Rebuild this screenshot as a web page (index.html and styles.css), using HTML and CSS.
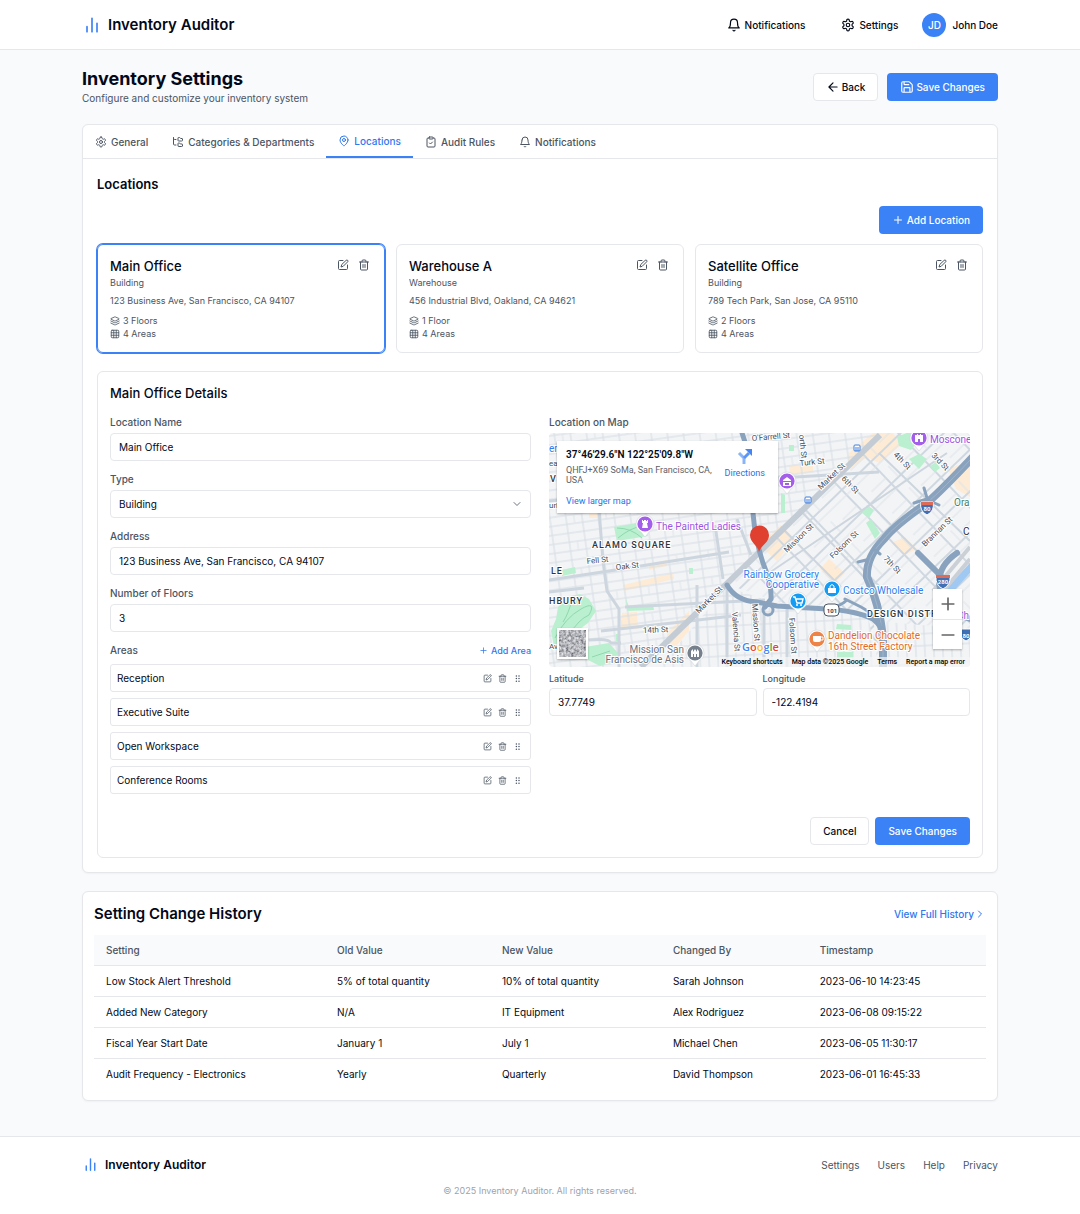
FILE: index.html
```html
<!DOCTYPE html>
<html lang="en">

<head>
    <meta charset="UTF-8">
    <meta name="viewport" content="width=device-width, initial-scale=1.0">
    <title>Inventory Settings - Inventory Auditor</title>
    <link rel="stylesheet" href="styles.css">
</head>

<body>
    <!-- Icon sprite -->
    <svg class="sprite" aria-hidden="true">
        <symbol id="i-chart" viewBox="0 0 24 24"><path d="M18 20V10M12 20V4M6 20v-6" /></symbol>
        <symbol id="i-bell" viewBox="0 0 24 24"><path d="M6 8a6 6 0 0 1 12 0c0 7 3 9 3 9H3s3-2 3-9M10.3 21a1.94 1.94 0 0 0 3.4 0" /></symbol>
        <symbol id="i-settings" viewBox="0 0 24 24"><path d="M12.22 2h-.44a2 2 0 0 0-2 2v.18a2 2 0 0 1-1 1.73l-.43.25a2 2 0 0 1-2 0l-.15-.08a2 2 0 0 0-2.73.73l-.22.38a2 2 0 0 0 .73 2.73l.15.1a2 2 0 0 1 1 1.72v.51a2 2 0 0 1-1 1.74l-.15.09a2 2 0 0 0-.73 2.73l.22.38a2 2 0 0 0 2.73.73l.15-.08a2 2 0 0 1 2 0l.43.25a2 2 0 0 1 1 1.73V20a2 2 0 0 0 2 2h.44a2 2 0 0 0 2-2v-.18a2 2 0 0 1 1-1.73l.43-.25a2 2 0 0 1 2 0l.15.08a2 2 0 0 0 2.73-.73l.22-.39a2 2 0 0 0-.73-2.73l-.15-.08a2 2 0 0 1-1-1.74v-.5a2 2 0 0 1 1-1.74l.15-.09a2 2 0 0 0 .73-2.73l-.22-.38a2 2 0 0 0-2.73-.73l-.15.08a2 2 0 0 1-2 0l-.43-.25a2 2 0 0 1-1-1.73V4a2 2 0 0 0-2-2z" /><circle cx="12" cy="12" r="3" /></symbol>
        <symbol id="i-back" viewBox="0 0 24 24"><path d="m12 19-7-7 7-7M19 12H5" /></symbol>
        <symbol id="i-save" viewBox="0 0 24 24"><path d="M15.2 3a2 2 0 0 1 1.4.6l3.8 3.8a2 2 0 0 1 .6 1.4V19a2 2 0 0 1-2 2H5a2 2 0 0 1-2-2V5a2 2 0 0 1 2-2zM17 21v-7a1 1 0 0 0-1-1H8a1 1 0 0 0-1 1v7M7 3v4a1 1 0 0 0 1 1h7" /></symbol>
        <symbol id="i-tree" viewBox="0 0 24 24"><path d="M20 10a1 1 0 0 0 1-1V6a1 1 0 0 0-1-1h-2.5a1 1 0 0 1-.8-.4l-.9-1.2A1 1 0 0 0 15 3h-2a1 1 0 0 0-1 1v5a1 1 0 0 0 1 1ZM20 21a1 1 0 0 0 1-1v-3a1 1 0 0 0-1-1h-2.9a1 1 0 0 1-.88-.55l-.42-.85a1 1 0 0 0-.92-.6H13a1 1 0 0 0-1 1v5a1 1 0 0 0 1 1ZM3 5a2 2 0 0 0 2 2h3M3 3v13a2 2 0 0 0 2 2h3" /></symbol>
        <symbol id="i-pin" viewBox="0 0 24 24"><path d="M20 10c0 6-8 12-8 12s-8-6-8-12a8 8 0 0 1 16 0Z" /><circle cx="12" cy="10" r="3" /></symbol>
        <symbol id="i-clipboard" viewBox="0 0 24 24"><rect x="8" y="2" width="8" height="4" rx="1" /><path d="M16 4h2a2 2 0 0 1 2 2v14a2 2 0 0 1-2 2H6a2 2 0 0 1-2-2V6a2 2 0 0 1 2-2h2M9 14l2 2 4-4" /></symbol>
        <symbol id="i-plus" viewBox="0 0 24 24"><path d="M5 12h14M12 5v14" /></symbol>
        <symbol id="i-edit" viewBox="0 0 24 24"><path d="M12 3H5a2 2 0 0 0-2 2v14a2 2 0 0 0 2 2h14a2 2 0 0 0 2-2v-7M18.4 2.6a2.1 2.1 0 0 1 3 3L12.4 14.6 8 16l1.4-4.4Z" /></symbol>
        <symbol id="i-trash" viewBox="0 0 24 24"><path d="M3 6h18M19 6v14a2 2 0 0 1-2 2H7a2 2 0 0 1-2-2V6M8 6V4a2 2 0 0 1 2-2h4a2 2 0 0 1 2 2v2M10 11v6M14 11v6" /></symbol>
        <symbol id="i-layers" viewBox="0 0 24 24"><path d="m12.8 2.2a2 2 0 0 0-1.6 0L2.6 6.1a1 1 0 0 0 0 1.8l8.6 3.9a2 2 0 0 0 1.6 0l8.6-3.9a1 1 0 0 0 0-1.8ZM22 12l-9.2 4.2a2 2 0 0 1-1.6 0L2 12M22 17l-9.2 4.2a2 2 0 0 1-1.6 0L2 17" /></symbol>
        <symbol id="i-grid" viewBox="0 0 24 24"><rect x="3" y="3" width="18" height="18" rx="2" /><path d="M3 9h18M3 15h18M9 3v18M15 3v18" /></symbol>
        <symbol id="i-grip" viewBox="0 0 24 24"><path d="M9 5h.01M9 12h.01M9 19h.01M16 5h.01M16 12h.01M16 19h.01" stroke-width="4" /></symbol>
        <symbol id="i-down" viewBox="0 0 24 24"><path d="m6 9 6 6 6-6" /></symbol>
        <symbol id="i-right" viewBox="0 0 24 24"><path d="m9 18 6-6-6-6" /></symbol>
    </svg>

    <header class="site-header">
        <div class="container header-inner">
            <a href="#" class="brand">
                <svg class="icon brand-icon"><use href="#i-chart" /></svg>
                Inventory Auditor
            </a>
            <nav class="header-nav">
                <button type="button" class="nav-btn"><svg class="icon icon-lg"><use href="#i-bell" /></svg>Notifications</button>
                <button type="button" class="nav-btn"><svg class="icon icon-lg"><use href="#i-settings" /></svg>Settings</button>
                <a href="#" class="user"><span class="avatar">JD</span>John Doe</a>
            </nav>
        </div>
    </header>

    <main class="container main">
        <div class="page-head">
            <div>
                <h1>Inventory Settings</h1>
                <p>Configure and customize your inventory system</p>
            </div>
            <div class="page-actions">
                <button type="button" class="btn btn-outline"><svg class="icon icon-lg"><use href="#i-back" /></svg>Back</button>
                <button type="button" class="btn btn-primary"><svg class="icon icon-lg"><use href="#i-save" /></svg>Save Changes</button>
            </div>
        </div>

        <section class="card">
            <div class="tabs" role="tablist">
                <button type="button" class="tab" role="tab"><svg class="icon"><use href="#i-settings" /></svg>General</button>
                <button type="button" class="tab" role="tab"><svg class="icon"><use href="#i-tree" /></svg>Categories &amp; Departments</button>
                <button type="button" class="tab active" role="tab" aria-selected="true"><svg class="icon"><use href="#i-pin" /></svg>Locations</button>
                <button type="button" class="tab" role="tab"><svg class="icon"><use href="#i-clipboard" /></svg>Audit Rules</button>
                <button type="button" class="tab" role="tab"><svg class="icon"><use href="#i-bell" /></svg>Notifications</button>
            </div>

            <div class="tab-panel">
                <h2>Locations</h2>
                <div class="add-row">
                    <button type="button" class="btn btn-primary btn-add"><svg class="icon"><use href="#i-plus" /></svg>Add Location</button>
                </div>

                <div class="location-grid">
                    <article class="location selected">
                        <div class="location-head">
                            <h3>Main Office</h3>
                            <div class="location-actions">
                                <button type="button" class="icon-btn" aria-label="Edit"><svg class="icon"><use href="#i-edit" /></svg></button>
                                <button type="button" class="icon-btn" aria-label="Delete"><svg class="icon"><use href="#i-trash" /></svg></button>
                            </div>
                        </div>
                        <p class="kind">Building</p>
                        <p class="address">123 Business Ave, San Francisco, CA 94107</p>
                        <p class="meta"><svg class="icon"><use href="#i-layers" /></svg>3 Floors</p>
                        <p class="meta"><svg class="icon"><use href="#i-grid" /></svg>4 Areas</p>
                    </article>
                    <article class="location">
                        <div class="location-head">
                            <h3>Warehouse A</h3>
                            <div class="location-actions">
                                <button type="button" class="icon-btn" aria-label="Edit"><svg class="icon"><use href="#i-edit" /></svg></button>
                                <button type="button" class="icon-btn" aria-label="Delete"><svg class="icon"><use href="#i-trash" /></svg></button>
                            </div>
                        </div>
                        <p class="kind">Warehouse</p>
                        <p class="address">456 Industrial Blvd, Oakland, CA 94621</p>
                        <p class="meta"><svg class="icon"><use href="#i-layers" /></svg>1 Floor</p>
                        <p class="meta"><svg class="icon"><use href="#i-grid" /></svg>4 Areas</p>
                    </article>
                    <article class="location">
                        <div class="location-head">
                            <h3>Satellite Office</h3>
                            <div class="location-actions">
                                <button type="button" class="icon-btn" aria-label="Edit"><svg class="icon"><use href="#i-edit" /></svg></button>
                                <button type="button" class="icon-btn" aria-label="Delete"><svg class="icon"><use href="#i-trash" /></svg></button>
                            </div>
                        </div>
                        <p class="kind">Building</p>
                        <p class="address">789 Tech Park, San Jose, CA 95110</p>
                        <p class="meta"><svg class="icon"><use href="#i-layers" /></svg>2 Floors</p>
                        <p class="meta"><svg class="icon"><use href="#i-grid" /></svg>4 Areas</p>
                    </article>
                </div>

                <form class="details">
                    <h3>Main Office Details</h3>
                    <div class="details-grid">
                        <div class="fields">
                            <div class="field">
                                <label for="name">Location Name</label>
                                <input type="text" id="name" value="Main Office">
                            </div>
                            <div class="field">
                                <label for="type">Type</label>
                                <div class="select-wrap">
                                    <select id="type">
                                        <option>Building</option>
                                        <option>Warehouse</option>
                                    </select>
                                    <svg class="icon select-arrow"><use href="#i-down" /></svg>
                                </div>
                            </div>
                            <div class="field">
                                <label for="address">Address</label>
                                <input type="text" id="address" value="123 Business Ave, San Francisco, CA 94107">
                            </div>
                            <div class="field">
                                <label for="floors">Number of Floors</label>
                                <input type="text" inputmode="numeric" id="floors" value="3">
                            </div>
                            <div class="field">
                                <div class="areas-head">
                                    <span class="label">Areas</span>
                                    <button type="button" class="link-btn"><svg class="icon"><use href="#i-plus" /></svg>Add Area</button>
                                </div>
                                <ul class="areas">
                                    <li>Reception
                                        <span class="area-actions">
                                            <button type="button" class="icon-btn" aria-label="Edit"><svg class="icon"><use href="#i-edit" /></svg></button>
                                            <button type="button" class="icon-btn" aria-label="Delete"><svg class="icon"><use href="#i-trash" /></svg></button>
                                            <button type="button" class="icon-btn" aria-label="Move"><svg class="icon"><use href="#i-grip" /></svg></button>
                                        </span>
                                    </li>
                                    <li>Executive Suite
                                        <span class="area-actions">
                                            <button type="button" class="icon-btn" aria-label="Edit"><svg class="icon"><use href="#i-edit" /></svg></button>
                                            <button type="button" class="icon-btn" aria-label="Delete"><svg class="icon"><use href="#i-trash" /></svg></button>
                                            <button type="button" class="icon-btn" aria-label="Move"><svg class="icon"><use href="#i-grip" /></svg></button>
                                        </span>
                                    </li>
                                    <li>Open Workspace
                                        <span class="area-actions">
                                            <button type="button" class="icon-btn" aria-label="Edit"><svg class="icon"><use href="#i-edit" /></svg></button>
                                            <button type="button" class="icon-btn" aria-label="Delete"><svg class="icon"><use href="#i-trash" /></svg></button>
                                            <button type="button" class="icon-btn" aria-label="Move"><svg class="icon"><use href="#i-grip" /></svg></button>
                                        </span>
                                    </li>
                                    <li>Conference Rooms
                                        <span class="area-actions">
                                            <button type="button" class="icon-btn" aria-label="Edit"><svg class="icon"><use href="#i-edit" /></svg></button>
                                            <button type="button" class="icon-btn" aria-label="Delete"><svg class="icon"><use href="#i-trash" /></svg></button>
                                            <button type="button" class="icon-btn" aria-label="Move"><svg class="icon"><use href="#i-grip" /></svg></button>
                                        </span>
                                    </li>
                                </ul>
                            </div>
                        </div>

                        <div class="map-col">
                            <span class="label">Location on Map</span>
                            <div class="map">
                                <svg class="map-canvas" viewBox="0 0 421 234" preserveAspectRatio="xMidYMid slice">
                                    <defs>
                                        <pattern id="west" width="32" height="27" patternUnits="userSpaceOnUse" patternTransform="rotate(-8)">
                                            <path d="M0 3H32M0 12H32M0 21H32M5 0V27M21 0V27" stroke="#d5dde4" stroke-width="1" />
                                            <path d="M13 3V12" stroke="#dfe5ea" stroke-width="1" />
                                        </pattern>
                                        <pattern id="soma" width="40" height="30" patternUnits="userSpaceOnUse" patternTransform="translate(268 60) rotate(-44)">
                                            <path d="M0 15H40M20 0V30" stroke="#cfd8e0" stroke-width="2" />
                                            <path d="M0 22H40M0 7H20M30 0V15" stroke="#dde3e8" stroke-width="1" />
                                        </pattern>
                                        <pattern id="south" width="18" height="30" patternUnits="userSpaceOnUse" patternTransform="rotate(-3)">
                                            <path d="M0 10H18M0 22H18M4 0V30M13 0V30" stroke="#d5dde4" stroke-width="1" />
                                        </pattern>
                                        <g id="poi">
                                            <path d="M-9 0a9 9 0 1 1 18 0c0 4-2 6-5 8l-4 5-4-5c-3-2-5-4-5-8z" fill="#fff" stroke="#c9ced4" stroke-width=".5" />
                                            <circle r="7.6" />
                                        </g>
                                    </defs>
                                    <rect width="421" height="234" fill="#f3f4f6" />

                                    <!-- commercial blocks -->
                                    <g fill="#fdebd5">
                                        <path d="M40 60h13v25H40zM74 152l50-12 1 6-50 12zM73 180l15-1 1 17-17 1zM100 131l18-4v6l-18 4zM8 18h12v8H8z" />
                                        <path d="m300 20 24-20h20l8 12-22 18-12-6-20 14zM210 112l22-20 14 14-18 22zM240 33l24-3v9l-23 2zM342 110l14-6 12 12-12 6zM118 200l22-22v20l-22 26zM280 126l16 14-10 10-15-14zM399 36l8 20 14 8V28z" />
                                    </g>

                                    <path d="M0 0H331L108 217 90 234H0z" fill="url(#west)" />
                                    <path d="M334 0H421V234H330L318 182 232 170 180 152z" fill="url(#soma)" />
                                    <path d="M110 234 178 154 232 172 318 182 334 234z" fill="url(#south)" />
                                    <path d="M324 188 421 196V234H334z" fill="#f3f4f6" />
                                    <path d="M324 188 421 196V234H334z" fill="url(#south)" />

                                    <!-- parks -->
                                    <g fill="#baf0cf">
                                        <path d="m65 94 30-5 4 14-31 5zM13 137l13-3 1 6-14 3z" />
                                        <path d="m19 164 12-3 9 5 7 12-8 12-8 6-2 12-24 6-3-16 5-12 2-12zM36 214l24-4 9 10-4 8-14 5-12-6zM77 166l3 8 24-3 1 6-27 1z" />
                                        <path d="m313 80 5-8 7 5-5 8zM317 90l5-4 9 14-5 6zM348 4l12-5 10 8-8 10-12-4zM360 26l10-5 8 5-8 10zM288 191l14 1v5l-15-1zM232 60l4 2v18h-4zM240 12h5v6h-5zM140 135h4v6h-4zM67 201h4v7h-4zM288 219h16v6h-16zM381 33l6-4 4 6-5 4z" />
                                    </g>
                                    <path d="M68 95q14 0 25 10M69 105q12-10 24-12M6 205q10-20 26-29t8 6q-10 4-20 20M24 164q-5 18-10 25M43 224l18-6" fill="none" stroke="#8fd8ad" stroke-width="1" />
                                    <path d="m385 168 36-38v10l-28 31z" fill="#9fc9f3" />
                                    <path d="m384 158 37-44M390 163l31-37" stroke="#cbd0d6" stroke-width="4" />

                                    <!-- main streets -->
                                    <g fill="none" stroke="#cdd6de" stroke-width="3">
                                        <path d="M0 147l60-9 120-19M0 159l35-4M50 76l4 52 4 30 12 18v58M166 92l8 54M178 150v84M148 152v82M215 234v-66M238 234v-60M188 86l14 36M0 68l230-23 100-6M52 198l80-9 60-7M76 174l140-7M40 207q20-2 22 3l10 0" />
                                        <path d="m330 20 91 88M290 40l100 100M250 76l80 84M232 94l60 60M220 140l178-120" stroke-width="2" />
                                    </g>
                                    <path d="M92 234 331 2" stroke="#c3ccd5" stroke-width="6" />

                                    <!-- freeways -->
                                    <g fill="none" stroke="#89a2bd" stroke-linecap="round">
                                        <path d="m193 0 4 12M204 80q2 26 10 50 9 22 8 36l-6 8M178 152q9 16 30 17l20 4 50 3q30 2 46 10 10 8 10 18v30" stroke-width="5" />
                                        <path d="M424 24q-30 32-46 46-32 22-43 36-18 18-17 38 12 26 16 60v30" stroke-width="8" />
                                        <path d="M424 24q-30 32-46 46-32 22-43 36-18 18-17 38 12 26 16 60v30" stroke="#9fb4ca" stroke-width="1" />
                                        <path d="M296 166l16 8q18 10 20 22M278 176q14-3 20-9M309 129l8-2M331 121l-5-4M375 55l3 10M365 70l13-4M390 72l-9-4" stroke-width="3" />
                                        <path d="m369 120 16 16 8 8M408 120q-18 12-18 30l3 18q8 12 28 18" stroke-width="6" />
                                        <circle cx="219" cy="177" r="5" stroke-width="3" />
                                    </g>

                                    <!-- street names -->
                                    <g class="street">
                                        <text transform="translate(203 8) rotate(-5)">O'Farrell St</text>
                                        <text transform="translate(251 33) rotate(-6)">Turk St</text>
                                        <text transform="translate(250 2) rotate(84)">orth St</text>
                                        <text transform="translate(272 57) rotate(-44)">Market St</text>
                                        <text transform="translate(292 46) rotate(46)">6th St</text>
                                        <text transform="translate(344 22) rotate(46)">4th St</text>
                                        <text transform="translate(382 23) rotate(46)">3rd St</text>
                                        <text transform="translate(238 120) rotate(-44)">Mission St</text>
                                        <text transform="translate(284 126) rotate(-44)">Folsom St</text>
                                        <text transform="translate(376 114) rotate(-44)">Brannan St</text>
                                        <text transform="translate(334 126) rotate(46)">7th St</text>
                                        <text transform="translate(38 131) rotate(-6)">Fell St</text>
                                        <text transform="translate(67 137) rotate(-6)">Oak St</text>
                                        <text transform="translate(150 181) rotate(-46)">Market St</text>
                                        <text transform="translate(94 200) rotate(-2)">14th St</text>
                                        <text transform="translate(183 179) rotate(86)">Valencia St</text>
                                        <text transform="translate(203 171) rotate(86)">Mission St</text>
                                        <text transform="translate(240 185) rotate(86)">Folsom St</text>
                                        <text x="0" y="33">ea</text>
                                        <text x="0" y="75">urk</text>
                                        <text x="0" y="216">Av</text>
                                    </g>
                                    <g class="district">
                                        <text x="43" y="115">ALAMO SQUARE</text>
                                        <text x="2" y="141">LE</text>
                                        <text x="0" y="171">HBURY</text>
                                        <text x="318" y="184">DESIGN DISTR</text>
                                        <text x="1" y="49">V</text>
                                    </g>
                                    <text class="place blue" x="0" y="19">er</text>
                                    <text class="place green" x="405" y="73">Ora</text>
                                    <text class="place dark" x="414" y="102">C</text>

                                    <!-- route shields -->
                                    <g class="shield">
                                        <path d="M372 69h12q2 9-6 13-8-4-6-13z" fill="#3f6fb5" stroke="#fff" />
                                        <path d="M372 69h12v3h-12z" fill="#dd6b55" />
                                        <text x="378" y="78">80</text>
                                        <path d="M387 143h14q1 9-7 13-8-4-7-13z" fill="#3f6fb5" stroke="#fff" />
                                        <path d="M387 142h14v3h-14z" fill="#dd6b55" />
                                        <text x="394" y="151">280</text>
                                        <path d="M411 196h12q1 9-6 12-7-3-6-12z" fill="#3f6fb5" stroke="#fff" />
                                        <text x="417" y="205">80</text>
                                        <rect x="275" y="171" width="15" height="12" rx="4" fill="#fff" stroke="#4b5563" />
                                        <text x="283" y="180" class="shield-us">101</text>
                                    </g>

                                    <!-- transit stops -->
                                    <g fill="#fff" stroke="#3e7fe0" stroke-width="1">
                                        <rect x="305" y="12" width="6" height="6" rx="1" />
                                        <rect x="256" y="64" width="6" height="6" rx="1" />
                                        <path d="M306 15h4M257 67h4M306 17h4M257 69h4" />
                                    </g>

                                    <!-- places -->
                                    <use href="#poi" x="96" y="91" fill="#a35eea" />
                                    <use href="#poi" x="238" y="48" fill="#a35eea" />
                                    <use href="#poi" x="370" y="5" fill="#a35eea" />
                                    <use href="#poi" x="283" y="156" fill="#159df5" />
                                    <use href="#poi" x="249" y="168" fill="#159df5" />
                                    <use href="#poi" x="268" y="206" fill="#ee8348" />
                                    <use href="#poi" x="146" y="220" fill="#75808c" />
                                    <path d="M93 87h1v1h1v-1h2v1h1v-1h1v3h-1l1 5h-6l1-5h-1zM234 47l4-3 4 3v1h-8zm0 2h8v4h-8zM366 2h2v-1h1v1h2v-1h1v1h2v7h-3V6h-2v3h-3zM279 155h8v5h-8zM142 224v-6l2-2v3l2-3 2 3v-3l2 2v6h-2v-3h-1v3h-2v-3h-1v3z" fill="#fff" />
                                    <path d="M236 50h4v2h-4z" fill="#a35eea" />
                                    <g fill="none" stroke="#fff" stroke-width="1">
                                        <path d="M281 155v-2q2-3 4 0v2M272 204h2v3h-2" />
                                        <path d="M244 164h2l2 6h5l1-4h-7" stroke-width="1.4" />
                                    </g>
                                    <path d="M264 203h8v4q0 2-2 2h-4q-2 0-2-2z" fill="#fff" />
                                    <circle cx="248" cy="172" r="1" fill="#fff" />
                                    <circle cx="252" cy="172" r="1" fill="#fff" />
                                    <text class="place purple" x="107" y="97">The Painted Ladies</text>
                                    <text class="place purple" x="381" y="10">Moscone</text>
                                    <text class="place purple" x="408" y="186">Ch</text>
                                    <text class="place blue end" x="270" y="145">Rainbow Grocery</text>
                                    <text class="place blue end" x="270" y="155">Cooperative</text>
                                    <text class="place blue" x="294" y="161">Costco Wholesale</text>
                                    <text class="place orange" x="279" y="206">Dandelion Chocolate</text>
                                    <text class="place orange" x="279" y="217">16th Street Factory</text>
                                    <text class="place grey end" x="135" y="220">Mission San</text>
                                    <text class="place grey end" x="135" y="230">Francisco de Asis</text>

                                    <!-- selected location -->
                                    <path d="M210 119c-1-7-9-9-9-17a9.500 9.500 0 1 1 19 0c0 8-8 10-10 17z" fill="#e0402f" />
                                    <text class="logo" x="193" y="218"><tspan fill="#4285f4">G</tspan><tspan fill="#ea4335">o</tspan><tspan fill="#fbbc05">o</tspan><tspan fill="#4285f4">g</tspan><tspan fill="#34a853">l</tspan><tspan fill="#ea4335">e</tspan></text>
                                </svg>

                                <div class="map-info">
                                    <div class="map-info-text">
                                        <strong>37°46'29.6"N 122°25'09.8"W</strong>
                                        <p>QHFJ+X69 SoMa, San Francisco, CA, USA</p>
                                        <a href="#">View larger map</a>
                                    </div>
                                    <a href="#" class="directions">
                                        <svg viewBox="0 0 16 16"><path d="M7 16V10L2 5" fill="none" stroke="#8ab4f8" stroke-width="3" /><path d="M7 10 12 5" stroke="#5b96f5" stroke-width="3" /><path d="M8 1h7v7z" fill="#4285f4" /></svg>
                                        Directions
                                    </a>
                                </div>
                                <button type="button" class="map-layer" aria-label="Satellite view">
                                    <svg viewBox="0 0 27 27">
                                        <filter id="terrain">
                                            <feTurbulence type="fractalNoise" baseFrequency="0.4" numOctaves="3" seed="4" />
                                            <feColorMatrix values="1 0 0 0 -.04  1 0 0 0 -.03  1 0 0 0 0  0 0 0 0 1" />
                                        </filter>
                                        <rect width="27" height="27" filter="url(#terrain)" />
                                    </svg>
                                </button>
                                <div class="map-zoom">
                                    <button type="button" aria-label="Zoom in"><svg class="icon"><use href="#i-plus" /></svg></button>
                                    <button type="button" aria-label="Zoom out"><svg class="icon" viewBox="0 0 24 24"><path d="M5 12h14" /></svg></button>
                                </div>
                                <div class="map-legal">
                                    <button type="button">Keyboard shortcuts</button>
                                    <span>Map data ©2025 Google</span>
                                    <a href="#">Terms</a>
                                    <a href="#">Report a map error</a>
                                </div>
                            </div>
                            <div class="coords">
                                <div class="field">
                                    <label for="lat">Latitude</label>
                                    <input type="text" id="lat" value="37.7749">
                                </div>
                                <div class="field">
                                    <label for="lng">Longitude</label>
                                    <input type="text" id="lng" value="-122.4194">
                                </div>
                            </div>
                        </div>
                    </div>
                    <div class="form-actions">
                        <button type="button" class="btn btn-outline">Cancel</button>
                        <button type="submit" class="btn btn-primary">Save Changes</button>
                    </div>
                </form>
            </div>
        </section>

        <section class="card history">
            <div class="history-head">
                <h2>Setting Change History</h2>
                <a href="#">View Full History<svg class="icon"><use href="#i-right" /></svg></a>
            </div>
            <table>
                <thead>
                    <tr>
                        <th>Setting</th>
                        <th>Old Value</th>
                        <th>New Value</th>
                        <th>Changed By</th>
                        <th>Timestamp</th>
                    </tr>
                </thead>
                <tbody>
                    <tr>
                        <td>Low Stock Alert Threshold</td>
                        <td>5% of total quantity</td>
                        <td>10% of total quantity</td>
                        <td>Sarah Johnson</td>
                        <td>2023-06-10 14:23:45</td>
                    </tr>
                    <tr>
                        <td>Added New Category</td>
                        <td>N/A</td>
                        <td>IT Equipment</td>
                        <td>Alex Rodriguez</td>
                        <td>2023-06-08 09:15:22</td>
                    </tr>
                    <tr>
                        <td>Fiscal Year Start Date</td>
                        <td>January 1</td>
                        <td>July 1</td>
                        <td>Michael Chen</td>
                        <td>2023-06-05 11:30:17</td>
                    </tr>
                    <tr>
                        <td>Audit Frequency - Electronics</td>
                        <td>Yearly</td>
                        <td>Quarterly</td>
                        <td>David Thompson</td>
                        <td>2023-06-01 16:45:33</td>
                    </tr>
                </tbody>
            </table>
        </section>
    </main>

    <footer class="site-footer">
        <div class="container">
            <div class="footer-row">
                <a href="#" class="brand brand-sm">
                    <svg class="icon brand-icon"><use href="#i-chart" /></svg>
                    Inventory Auditor
                </a>
                <nav class="footer-nav">
                    <a href="#">Settings</a>
                    <a href="#">Users</a>
                    <a href="#">Help</a>
                    <a href="#">Privacy</a>
                </nav>
            </div>
            <p class="copyright">© 2025 Inventory Auditor. All rights reserved.</p>
        </div>
    </footer>
</body>

</html>
```

FILE: styles.css
```css
* {
    box-sizing: border-box;
}

body {
    margin: 0;
    font-family: Inter, sans-serif;
    font-size: 10px;
    line-height: 16px;
    color: #020817;
    background: #f8fafc;
}

h1,
h2,
h3,
p,
ul {
    margin: 0;
    padding: 0;
}

a {
    color: inherit;
    text-decoration: none;
}

button,
input,
select {
    font: inherit;
    color: inherit;
}

button {
    background: none;
    border: none;
    padding: 0;
    cursor: pointer;
}

.sprite {
    display: none;
}

.icon {
    width: 12px;
    height: 12px;
    flex-shrink: 0;
    fill: none;
    stroke: currentColor;
    stroke-width: 2;
    stroke-linecap: round;
    stroke-linejoin: round;
}

.icon-lg {
    width: 14px;
    height: 14px;
}

.container {
    max-width: 948px;
    margin: 0 auto;
    padding: 0 16px;
}

/* Header */
.site-header {
    background: #fff;
    border-bottom: 1px solid #e5e7eb;
}

.header-inner {
    display: flex;
    justify-content: space-between;
    align-items: center;
    height: 49px;
}

.brand {
    display: flex;
    align-items: center;
    gap: 6px;
    font-size: 15px;
    font-weight: 600;
}

.brand-icon {
    width: 20px;
    height: 20px;
    color: #3b82f6;
}

.header-nav {
    display: flex;
    align-items: center;
    gap: 12px;
    font-weight: 500;
}

.nav-btn {
    display: flex;
    align-items: center;
    gap: 4px;
    padding: 6px 12px;
    font-weight: 500;
}

.user {
    display: flex;
    align-items: center;
    gap: 6px;
}

.avatar {
    display: flex;
    align-items: center;
    justify-content: center;
    width: 24px;
    height: 24px;
    border-radius: 50%;
    background: #3b82f6;
    color: #fff;
}

/* Page head */
.page-head {
    display: flex;
    justify-content: space-between;
    align-items: center;
    padding: 18px 0;
}

.page-head h1 {
    font-size: 18px;
    line-height: 22px;
    font-weight: 700;
}

.page-head p {
    color: #4b5563;
}

.page-actions {
    display: flex;
    gap: 9px;
}

.btn {
    display: flex;
    align-items: center;
    justify-content: center;
    gap: 2px;
    height: 28px;
    padding: 0 12px;
    border: 1px solid transparent;
    border-radius: 4px;
    font-weight: 500;
    white-space: nowrap;
}

.btn-outline {
    background: #fff;
    border-color: #e5e7eb;
}

.btn-primary {
    background: #3b82f6;
    color: #fff;
}

/* Cards and tabs */
.card {
    background: #fff;
    border: 1px solid #e5e7eb;
    border-radius: 6px;
    box-shadow: 0 1px 2px rgba(0, 0, 0, 0.04);
}

.tabs {
    display: flex;
    border-bottom: 1px solid #e5e7eb;
}

.tab {
    display: flex;
    align-items: center;
    gap: 4px;
    height: 33px;
    padding: 0 12px;
    color: #4b5563;
    font-weight: 500;
}

.tab.active {
    color: #2f78ee;
    border-bottom: 2px solid #3b82f6;
}

.tab-panel {
    padding: 17px 14px 14px;
}

.tab-panel h2 {
    font-size: 13px;
    font-weight: 600;
}

.add-row {
    display: flex;
    justify-content: flex-end;
    margin: 14px 0 10px;
}

.btn-add {
    gap: 3px;
}

.location-grid {
    display: grid;
    grid-template-columns: repeat(3, 1fr);
    gap: 11px;
}

.location {
    padding: 12px;
    border: 1px solid #e5e7eb;
    border-radius: 6px;
    font-size: 9px;
    line-height: 13px;
    color: #4b5563;
}

.location.selected {
    border-color: #3b82f6;
    box-shadow: 0 0 0 1px #3b82f6;
}

.location-head {
    display: flex;
    justify-content: space-between;
}

.location h3,
.details h3 {
    font-size: 13px;
    line-height: 19px;
    font-weight: 500;
    color: #020817;
}

.location-actions {
    display: flex;
    gap: 9px;
    padding: 2px;
}

.icon-btn {
    display: flex;
    color: #4b5563;
}

.address {
    margin: 5px 0 7px;
}

.meta {
    display: flex;
    align-items: center;
    gap: 3px;
}

.meta .icon {
    width: 10px;
    height: 10px;
}

/* Details form */
.details {
    margin-top: 18px;
    padding: 12px;
    border: 1px solid #e5e7eb;
    border-radius: 6px;
}

.details-grid {
    display: grid;
    grid-template-columns: 1fr 1fr;
    gap: 18px;
    margin-top: 12px;
}

.fields {
    display: flex;
    flex-direction: column;
    gap: 11px;
}

.field {
    min-width: 0;
}

label,
.label {
    display: block;
    margin-bottom: 3px;
    line-height: 15px;
    font-weight: 500;
    color: #4b5563;
}

.field input,
.field select {
    display: block;
    width: 100%;
    height: 28px;
    padding: 0 8px;
    border: 1px solid #e5e7eb;
    border-radius: 4px;
    background: #fff;
    appearance: none;
}

.select-wrap {
    position: relative;
}

.select-arrow {
    position: absolute;
    right: 8px;
    top: 8px;
    color: #6b7280;
    pointer-events: none;
}

.areas-head {
    display: flex;
    justify-content: space-between;
    margin-bottom: 3px;
}

.link-btn {
    display: flex;
    align-items: center;
    gap: 3px;
    height: 15px;
    font-size: 9px;
    font-weight: 500;
    color: #2f78ee;
}

.link-btn .icon,
.area-actions .icon {
    width: 9px;
    height: 9px;
}

.areas {
    display: grid;
    gap: 6px;
    list-style: none;
}

.areas li {
    display: flex;
    justify-content: space-between;
    align-items: center;
    height: 28px;
    padding: 0 8px 0 6px;
    border: 1px solid #e5e7eb;
    border-radius: 3px;
}

.area-actions {
    display: flex;
    gap: 6px;
}

/* Map */
.map {
    position: relative;
    aspect-ratio: 421 / 234;
    border-radius: 4px;
    overflow: hidden;
    font-family: Roboto, sans-serif;
}

.map-canvas {
    display: block;
    width: 100%;
    height: 100%;
}

.street {
    font-size: 8px;
    fill: #454c55;
    paint-order: stroke;
    stroke: #fff;
    stroke-width: 2px;
}

.district {
    font-size: 9px;
    font-weight: 500;
    letter-spacing: 1px;
    fill: #2f3640;
    paint-order: stroke;
    stroke: #fff;
    stroke-width: 2px;
}

.place {
    font-size: 10px;
    paint-order: stroke;
    stroke: #fff;
    stroke-width: 2px;
}

.purple {
    fill: #9c55e0;
}

.blue {
    fill: #2d7ff0;
}

.green {
    fill: #4b8068;
}

.dark {
    fill: #1f2937;
}

.orange {
    fill: #df6b27;
}

.grey {
    fill: #69727d;
}

.end {
    text-anchor: end;
}

.shield text {
    font-size: 6px;
    font-weight: 700;
    text-anchor: middle;
    fill: #fff;
}

.shield .shield-us {
    fill: #374151;
}

.logo {
    font-family: "Open Sans", sans-serif;
    font-size: 11px;
    font-weight: 600;
    paint-order: stroke;
    stroke: #fff;
    stroke-width: 2px;
}

.map-info {
    position: absolute;
    left: 8px;
    top: 8px;
    display: flex;
    justify-content: space-between;
    width: 221px;
    padding: 7px 13px 7px 9px;
    background: #fff;
    box-shadow: 0 1px 2px rgba(0, 0, 0, 0.3);
    font-size: 9px;
    line-height: 10px;
}

.map-info-text {
    width: 150px;
}

.map-info strong {
    display: block;
    font-size: 10px;
    line-height: 13px;
    font-weight: 600;
    white-space: nowrap;
}

.map-info p {
    margin: 4px 0 11px;
    color: #5b6068;
}

.map-info a {
    color: #1a73e8;
}

.directions {
    display: flex;
    flex-direction: column;
    align-items: center;
    gap: 4px;
}

.directions svg {
    width: 16px;
    height: 16px;
}

.map-layer {
    position: absolute;
    left: 8px;
    bottom: 8px;
    width: 31px;
    height: 31px;
    border: 2px solid #fff;
    box-shadow: 0 1px 2px rgba(0, 0, 0, 0.3);
}

.map-layer svg {
    display: block;
}

.map-zoom {
    position: absolute;
    right: 8px;
    bottom: 18px;
    width: 29px;
    background: #fff;
    box-shadow: 0 1px 2px rgba(0, 0, 0, 0.3);
}

.map-zoom button {
    display: flex;
    align-items: center;
    justify-content: center;
    width: 100%;
    height: 30px;
    color: #666;
}

.map-zoom button + button {
    border-top: 1px solid #e6e6e6;
}

.map-zoom .icon {
    width: 20px;
    height: 20px;
}

.map-legal {
    position: absolute;
    right: 0;
    bottom: 0;
    display: flex;
    gap: 9px;
    padding: 0 5px 0 3px;
    background: rgba(245, 245, 245, 0.7);
    font-size: 7px;
    font-weight: 500;
    line-height: 10px;
    color: #000;
}

.coords {
    display: grid;
    grid-template-columns: 1fr 1fr;
    gap: 6px;
    margin-top: 4px;
}

.coords label {
    font-size: 9px;
    margin-bottom: 2px;
}

.form-actions {
    display: flex;
    justify-content: flex-end;
    gap: 6px;
    margin-top: 23px;
}

/* History */
.history {
    margin-top: 18px;
    padding: 11px;
}

.history-head {
    display: flex;
    justify-content: space-between;
    align-items: center;
    margin-bottom: 10px;
}

.history-head h2 {
    font-size: 15px;
    line-height: 22px;
    font-weight: 600;
}

.history-head a {
    display: flex;
    align-items: center;
    font-weight: 500;
    color: #2f78ee;
}

table {
    width: 100%;
    border-collapse: collapse;
}

th {
    background: #f8fafc;
    color: #4b5563;
    font-weight: 500;
    text-align: left;
}

th,
td {
    padding: 7px 12px;
    border-bottom: 1px solid #e5e7eb;
}

tbody tr:last-child td {
    border-bottom: none;
}

/* Footer */
.site-footer {
    margin-top: 35px;
    padding: 19px 0 16px;
    background: #fff;
    border-top: 1px solid #e5e7eb;
}

.footer-row {
    display: flex;
    justify-content: space-between;
    align-items: center;
}

.brand-sm {
    font-size: 12px;
}

.brand-sm .brand-icon {
    width: 17px;
    height: 17px;
}

.footer-nav {
    display: flex;
    gap: 18px;
    color: #4b5563;
}

.copyright {
    margin-top: 10px;
    font-size: 9px;
    text-align: center;
    color: #9ca3af;
}
```
